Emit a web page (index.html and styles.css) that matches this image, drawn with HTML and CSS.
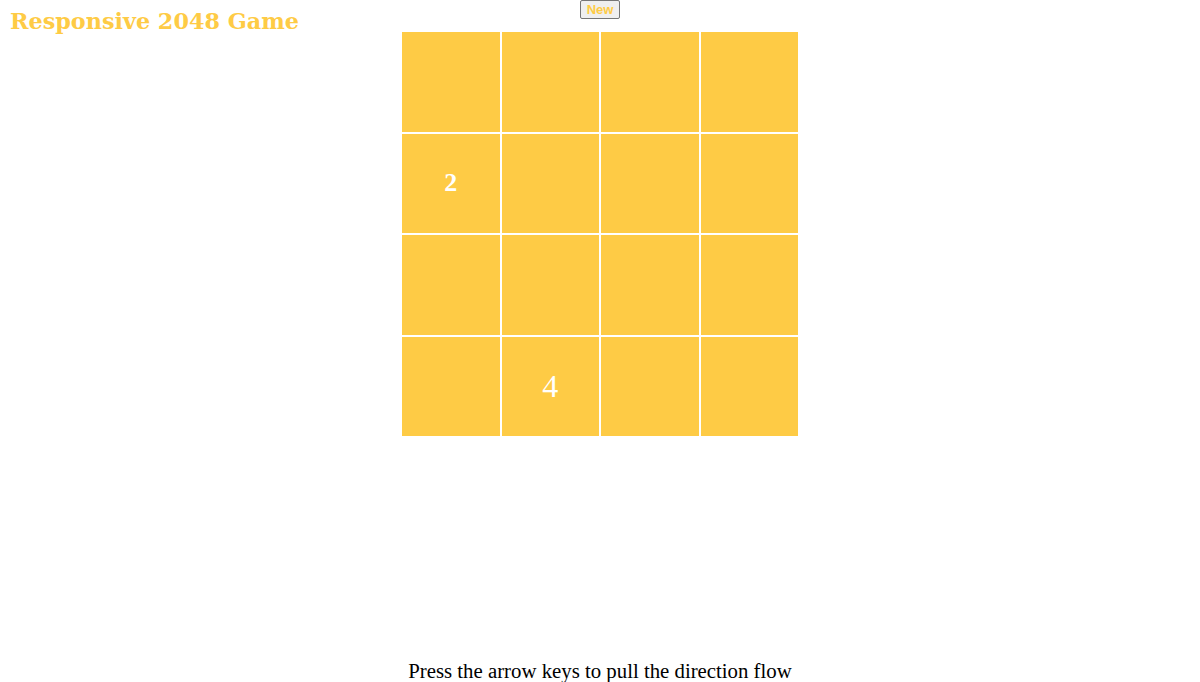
FILE: index.html
```html
<!DOCTYPE html>
<html>
<head>
<meta charset="utf-8">
<title>Responsive 2048 Game</title>
<link rel="stylesheet" href="styles.css">
</head>
<body>
<div class="top">
  <h1 class="title">Responsive 2048 Game</h1>
  <div class="game">
    <button class="new-btn">New</button>
    <div class="board">
      <div class="cell"></div><div class="cell"></div><div class="cell"></div><div class="cell"></div>
      <div class="cell"><span class="num two">2</span></div><div class="cell"></div><div class="cell"></div><div class="cell"></div>
      <div class="cell"></div><div class="cell"></div><div class="cell"></div><div class="cell"></div>
      <div class="cell"></div><div class="cell"><span class="num four">4</span></div><div class="cell"></div><div class="cell"></div>
    </div>
  </div>
  <div></div>
</div>
<p class="hint">Press the arrow keys to pull the direction flow</p>
</body>
</html>
```
FILE: styles.css
```css
html, body {
  margin: 0;
  padding: 0;
  background: #ffffff;
  font-family: "Liberation Serif", "Times New Roman", serif;
  overflow: hidden;
}
.top {
  display: grid;
  grid-template-columns: 1fr 398px 1fr;
}
.title {
  margin: 6px 0 0 10px;
  font-family: "DejaVu Serif", Georgia, serif;
  font-size: 22.3px;
  font-weight: bold;
  color: #fecb45;
  white-space: nowrap;
  line-height: 30px;
}
.game {
  display: flex;
  flex-direction: column;
  align-items: center;
}
.new-btn {
  font-family: "Liberation Sans", Arial, sans-serif;
  font-size: 13px;
  font-weight: 600;
  color: #fecb45;
  background: #efefef;
  border: 1px solid #767676;
  border-radius: 2px;
  height: 19px;
  width: 40px;
  padding: 0;
  margin: 0 0 12px 0;
}
.board {
  display: grid;
  grid-template-columns: repeat(4, 99.5px);
  grid-template-rows: repeat(4, 101.5px);
  width: 398px;
}
.cell {
  background: #fecb45;
  border: 1px solid #ffffff;
  display: flex;
  align-items: center;
  justify-content: center;
}
.num {
  color: #ffffff;
}
.two {
  font-size: 26px;
  font-weight: bold;
}
.four {
  font-size: 32px;
}
.hint {
  margin: 221px 0 0 0;
  text-align: center;
  font-size: 20.8px;
  color: #000000;
  line-height: 26px;
}
```
